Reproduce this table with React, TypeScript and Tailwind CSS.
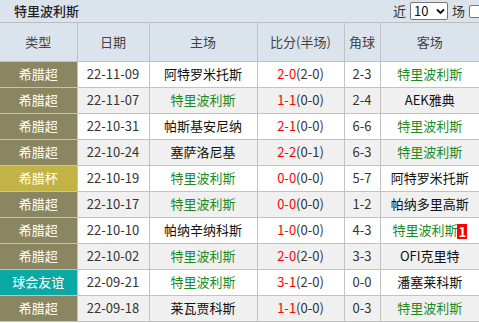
import React from "react";

type Row = {
  type: string;
  kind: "league" | "cup" | "friendly";
  date: string;
  home: string;
  homeWin?: boolean;
  ft: string;
  ht: string;
  corner: string;
  away: string;
  awayWin?: boolean;
  badge?: string;
};

const rows: Row[] = [
  { type: "希腊超", kind: "league", date: "22-11-09", home: "阿特罗米托斯", ft: "2-0", ht: "(2-0)", corner: "2-3", away: "特里波利斯", awayWin: true },
  { type: "希腊超", kind: "league", date: "22-11-07", home: "特里波利斯", homeWin: true, ft: "1-1", ht: "(0-0)", corner: "2-4", away: "AEK雅典" },
  { type: "希腊超", kind: "league", date: "22-10-31", home: "帕斯基安尼纳", ft: "2-1", ht: "(0-0)", corner: "6-6", away: "特里波利斯", awayWin: true },
  { type: "希腊超", kind: "league", date: "22-10-24", home: "塞萨洛尼基", ft: "2-2", ht: "(0-1)", corner: "6-3", away: "特里波利斯", awayWin: true },
  { type: "希腊杯", kind: "cup", date: "22-10-19", home: "特里波利斯", homeWin: true, ft: "0-0", ht: "(0-0)", corner: "5-7", away: "阿特罗米托斯" },
  { type: "希腊超", kind: "league", date: "22-10-17", home: "特里波利斯", homeWin: true, ft: "0-0", ht: "(0-0)", corner: "1-2", away: "帕纳多里高斯" },
  { type: "希腊超", kind: "league", date: "22-10-10", home: "帕纳辛纳科斯", ft: "1-0", ht: "(0-0)", corner: "4-3", away: "特里波利斯", awayWin: true, badge: "1" },
  { type: "希腊超", kind: "league", date: "22-10-02", home: "特里波利斯", homeWin: true, ft: "2-0", ht: "(2-0)", corner: "3-3", away: "OFI克里特" },
  { type: "球会友谊", kind: "friendly", date: "22-09-21", home: "特里波利斯", homeWin: true, ft: "3-1", ht: "(2-0)", corner: "0-0", away: "潘塞莱科斯" },
  { type: "希腊超", kind: "league", date: "22-09-18", home: "莱瓦贾科斯", ft: "1-1", ht: "(0-0)", corner: "0-3", away: "特里波利斯", awayWin: true },
];

const kindBg = {
  league: "bg-[#8a8662]",
  cup: "bg-[#c1b345]",
  friendly: "bg-[#0aa9a4]",
};

const font = { fontFamily: '"Noto Sans CJK SC", "Noto Sans", sans-serif' };

export default function App() {
  return (
    <div className="w-[479px] h-[323px] overflow-hidden bg-white text-[12px] text-[#333]" style={font}>
      <div className="h-[23px] flex items-center justify-between bg-[#dbe3ec] border-b border-[#bdbdbd] pl-[14px] pr-0">
        <span className="text-[13px] font-medium text-[#222]">特里波利斯</span>
        <div className="flex items-center gap-[4px] text-[13px] text-[#333]">
          <span>近</span>
          <div className="h-[18px] w-[38px] border border-[#777] bg-white rounded-[2px] flex items-center justify-between pl-[3px] pr-[2px] text-[13px] text-[#111]">
            <span>10</span>
            <svg width="9" height="7" viewBox="0 0 9 7">
              <path d="M1 1.5 L4.5 5 L8 1.5" stroke="#111" strokeWidth="1.8" fill="none" />
            </svg>
          </div>
          <span>场</span>
          <div className="w-[13px] h-[13px] border border-[#777] bg-white rounded-[2px] -mr-[3px]" />
        </div>
      </div>
      <table className="w-[480px] border-collapse table-fixed">
        <colgroup>
          <col className="w-[77px]" />
          <col className="w-[72px]" />
          <col className="w-[108px]" />
          <col className="w-[87px]" />
          <col className="w-[36px]" />
          <col />
        </colgroup>
        <thead>
          <tr className="h-[38px] bg-[#dbe3ec] text-[13px] text-[#444]">
            {["类型", "日期", "主场", "比分(半场)", "角球", "客场"].map((h) => (
              <th key={h} className="font-normal border border-[#c2c2c2] border-t-0 first:border-l-0">
                {h}
              </th>
            ))}
          </tr>
        </thead>
        <tbody>
          {rows.map((r, i) => (
            <tr key={i} className={`h-[26px] ${i % 2 === 1 ? "bg-[#f0f0f0]" : "bg-white"}`}>
              <td className={`${kindBg[r.kind]} text-white text-center text-[13px] border border-[#c2c2c2] border-l-0`}>
                {r.type}
              </td>
              <td className="text-center text-[13px] border border-[#c2c2c2]">{r.date}</td>
              <td className={`text-center text-[13px] border border-[#c2c2c2] ${r.homeWin ? "text-[#1f8a1f]" : "text-[#111]"}`}>
                {r.home}
              </td>
              <td className="text-center text-[13px] border border-[#c2c2c2]">
                <span className="text-[#ff0000]">{r.ft}</span>
                <span>{r.ht}</span>
              </td>
              <td className="text-center text-[13px] border border-[#c2c2c2]">{r.corner}</td>
              <td className={`text-center text-[13px] border border-[#c2c2c2] ${r.awayWin ? "text-[#1f8a1f]" : "text-[#111]"}`}>
                {r.away}
                {r.badge && (
                  <span className="inline-block bg-[#ff0000] text-white font-bold px-[1px] leading-[15px] align-middle">
                    {r.badge}
                  </span>
                )}
              </td>
            </tr>
          ))}
        </tbody>
      </table>
    </div>
  );
}
